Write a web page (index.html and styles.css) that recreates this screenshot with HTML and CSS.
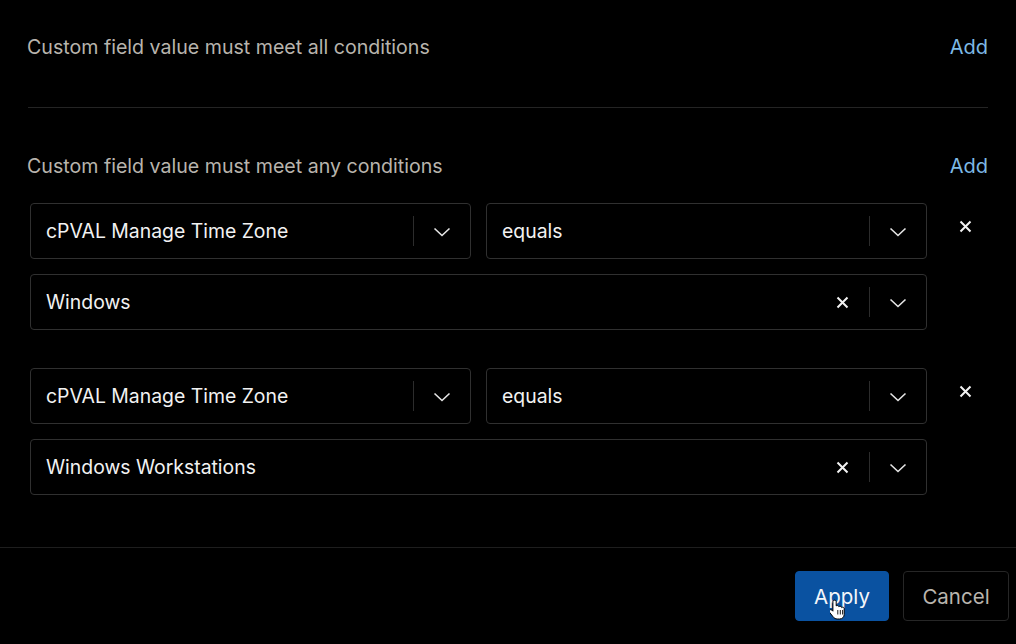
FILE: index.html
```html
<!DOCTYPE html>
<html>
<head>
<meta charset="utf-8">
<link rel="stylesheet" href="styles.css">
</head>
<body>
<div class="panel">
  <div class="content">
    <div class="cond-header">
      <span class="cond-label">Custom field value must meet all conditions</span>
      <a class="add-link">Add</a>
    </div>
    <div class="divider"></div>
    <div class="cond-header second">
      <span class="cond-label">Custom field value must meet any conditions</span>
      <a class="add-link">Add</a>
    </div>

    <div class="cond-group">
      <div class="select field">
        <span class="select-value">cPVAL Manage Time Zone</span>
        <span class="sep"></span>
        <span class="indicator"><svg width="18" height="10" viewBox="0 0 18 10"><path d="M1.5 1.5 L9 8.5 L16.5 1.5" fill="none" stroke="#e6e6e6" stroke-width="1.6"/></svg></span>
      </div>
      <div class="select op">
        <span class="select-value">equals</span>
        <span class="sep"></span>
        <span class="indicator"><svg width="18" height="10" viewBox="0 0 18 10"><path d="M1.5 1.5 L9 8.5 L16.5 1.5" fill="none" stroke="#e6e6e6" stroke-width="1.6"/></svg></span>
      </div>
      <div class="remove"><svg width="13" height="13" viewBox="0 0 13 13"><path d="M1.5 1.5 L11.5 11.5 M11.5 1.5 L1.5 11.5" stroke="#f2f2f2" stroke-width="2"/></svg></div>
      <div class="select value">
        <span class="select-value">Windows</span>
        <span class="clear"><svg width="13" height="13" viewBox="0 0 13 13"><path d="M1.5 1.5 L11.5 11.5 M11.5 1.5 L1.5 11.5" stroke="#f2f2f2" stroke-width="2"/></svg></span>
        <span class="sep"></span>
        <span class="indicator"><svg width="18" height="10" viewBox="0 0 18 10"><path d="M1.5 1.5 L9 8.5 L16.5 1.5" fill="none" stroke="#e6e6e6" stroke-width="1.6"/></svg></span>
      </div>
    </div>

    <div class="cond-group">
      <div class="select field">
        <span class="select-value">cPVAL Manage Time Zone</span>
        <span class="sep"></span>
        <span class="indicator"><svg width="18" height="10" viewBox="0 0 18 10"><path d="M1.5 1.5 L9 8.5 L16.5 1.5" fill="none" stroke="#e6e6e6" stroke-width="1.6"/></svg></span>
      </div>
      <div class="select op">
        <span class="select-value">equals</span>
        <span class="sep"></span>
        <span class="indicator"><svg width="18" height="10" viewBox="0 0 18 10"><path d="M1.5 1.5 L9 8.5 L16.5 1.5" fill="none" stroke="#e6e6e6" stroke-width="1.6"/></svg></span>
      </div>
      <div class="remove"><svg width="13" height="13" viewBox="0 0 13 13"><path d="M1.5 1.5 L11.5 11.5 M11.5 1.5 L1.5 11.5" stroke="#f2f2f2" stroke-width="2"/></svg></div>
      <div class="select value">
        <span class="select-value">Windows Workstations</span>
        <span class="clear"><svg width="13" height="13" viewBox="0 0 13 13"><path d="M1.5 1.5 L11.5 11.5 M11.5 1.5 L1.5 11.5" stroke="#f2f2f2" stroke-width="2"/></svg></span>
        <span class="sep"></span>
        <span class="indicator"><svg width="18" height="10" viewBox="0 0 18 10"><path d="M1.5 1.5 L9 8.5 L16.5 1.5" fill="none" stroke="#e6e6e6" stroke-width="1.6"/></svg></span>
      </div>
    </div>
  </div>

  <div class="footer">
    <button class="btn btn-primary">Apply
      <svg class="cursor" width="16" height="22" viewBox="0 0 16 22"><path d="M4.5 1.2c-.9 0-1.6.7-1.6 1.6v9.4l-1-1c-.7-.7-1.8-.7-2.4 0-.5.6-.5 1.4 0 2l3.6 4.6c1 1.3 2.3 2.2 4.1 2.2h2.4c2.7 0 4.6-2 4.6-4.6V9.7c0-.9-.7-1.5-1.5-1.5-.4 0-.7.1-1 .4-.1-.8-.8-1.4-1.6-1.4-.5 0-.9.2-1.2.5-.2-.7-.8-1.200-1.6-1.2-.4 0-.8.2-1.1.4V2.8c0-.9-.7-1.6-1.6-1.6z" fill="#fff" stroke="#000" stroke-width="1"/><path d="M7.8 11v4.5M10.3 11v4.5M12.6 11v4.5" stroke="#000" stroke-width="0.9"/></svg>
    </button>
    <button class="btn btn-secondary">Cancel</button>
  </div>
</div>
</body>
</html>
```
FILE: styles.css
```css
* { box-sizing: border-box; }
html, body {
  margin: 0;
  padding: 0;
  background: #000;
  width: 1016px;
  height: 644px;
  overflow: hidden;
}
body {
  font-family: Inter, "Noto Sans", "Liberation Sans", sans-serif;
  color: #f0f0f0;
}
.panel {
  display: flex;
  flex-direction: column;
  height: 644px;
}
.content {
  padding: 27px 28px 0 27px;
  flex: 1;
}
.cond-header {
  display: flex;
  justify-content: space-between;
  align-items: center;
  height: 40px;
}
.cond-header.second {
  margin-top: 38px;
  margin-bottom: 17px;
}
.cond-label {
  font-size: 19.6px;
  color: #b8b4ad;
}
.add-link {
  font-size: 20px;
  color: #7db9e5;
  cursor: pointer;
}
.divider {
  margin-top: 40px;
  margin-left: 1px;
  height: 1px;
  background: #242424;
}
.cond-group {
  display: grid;
  grid-template-columns: 441px 441px 1fr;
  column-gap: 15px;
  row-gap: 15px;
  padding-left: 3px;
  margin-bottom: 38px;
}
.cond-group + .cond-group { margin-bottom: 0; }
.select {
  height: 56px;
  border: 1px solid #303030;
  border-radius: 4px;
  display: flex;
  align-items: center;
  background: #000;
}
.select.value { grid-column: 1 / span 2; }
.select-value {
  flex: 1;
  padding-left: 15px;
  font-size: 19.4px;
  color: #f2f2f2;
  white-space: nowrap;
}
.sep {
  width: 1px;
  height: 30px;
  background: #2c2c2c;
}
.indicator {
  width: 56px;
  display: flex;
  justify-content: center;
  align-items: center;
  padding-top: 2px;
}
.clear {
  width: 54px;
  display: flex;
  justify-content: center;
  align-items: center;
}
.remove {
  display: flex;
  justify-content: center;
  align-items: flex-start;
  padding-top: 17px;
}
.footer {
  border-top: 1px solid #1e1e1e;
  display: flex;
  justify-content: flex-end;
  gap: 14px;
  padding: 23px 7px 23px 28px;
}
.btn {
  height: 50px;
  border-radius: 4px;
  font-family: Inter, "Noto Sans", "Liberation Sans", sans-serif;
  font-size: 20.5px;
  padding: 0;
  position: relative;
}
.btn-primary {
  background: #0a52a1;
  color: #f4f6fa;
  border: 1px solid #0a52a1;
  width: 94px;
}
.btn-secondary {
  background: #000;
  color: #b9b5ae;
  border: 1px solid #262626;
  width: 106px;
}
.cursor {
  position: absolute;
  left: 34px;
  top: 27px;
}
```
